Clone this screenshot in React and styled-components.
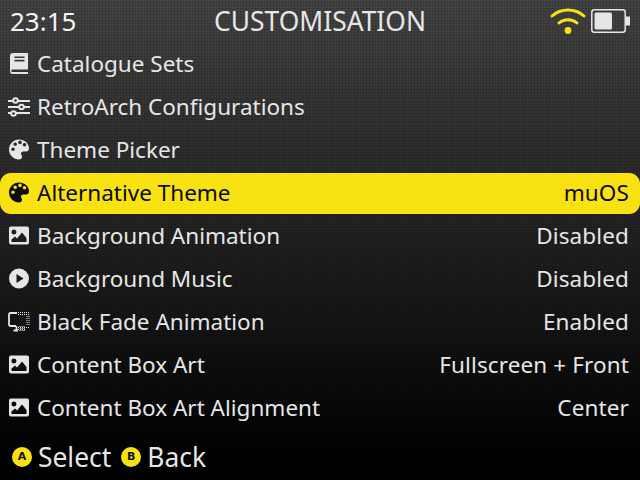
import React from "react";
import styled, { createGlobalStyle } from "styled-components";

const Global = createGlobalStyle`
  html, body { margin: 0; padding: 0; background: #000; }
  #root { width: 640px; height: 480px; overflow: hidden; }
`;

const Screen = styled.div`
  width: 640px;
  height: 480px;
  display: flex;
  flex-direction: column;
  font-family: "Noto Sans", sans-serif;
  color: #e6e6e6;
  background:
    repeating-linear-gradient(0deg, rgba(0,0,0,.12) 0 1px, transparent 1px 3px),
    repeating-linear-gradient(90deg, rgba(0,0,0,.12) 0 1px, transparent 1px 3px),
    linear-gradient(#444 0, #000 460px);
`;

const Header = styled.header`
  height: 44px;
  box-sizing: border-box;
  display: grid;
  grid-template-columns: 1fr auto 1fr;
  align-items: center;
  padding: 0 10px 2px;
`;

const Clock = styled.span`
  font-size: 26px;
  color: #f4f4f4;
`;

const Title = styled.span`
  font-size: 26.4px;
`;

const Status = styled.div`
  display: flex;
  justify-content: flex-end;
  align-items: center;
  gap: 5px;
`;

const List = styled.div`
  display: flex;
  flex-direction: column;
  flex: 1;
`;

const Row = styled.div`
  height: 41px;
  box-sizing: border-box;
  margin-bottom: 2px;
  display: flex;
  align-items: center;
  padding: 0 11px 2px 9px;
  font-size: 22.5px;
  line-height: 39px;
  border-radius: 11px;
  ${(p) => (p.$active ? "background:#f9e211;color:#0b0b0b;" : "")}
`;

const IconBox = styled.span`
  width: 20px;
  height: 22px;
  margin-right: 8px;
  display: flex;
  align-items: center;
  justify-content: center;
  flex: none;
`;

const Label = styled.span`
  flex: 1;
`;

const Value = styled.span`
  letter-spacing: 0.12px;
`;

const Footer = styled.footer`
  height: 45px;
  box-sizing: border-box;
  display: flex;
  align-items: center;
  padding: 0 0 2px 12px;
  font-size: 26.4px;
`;

const Badge = styled.span`
  width: 20px;
  height: 20px;
  border-radius: 50%;
  background: #f9e211;
  color: #111;
  font: 700 11px "DejaVu Sans", sans-serif;
  display: flex;
  align-items: center;
  justify-content: center;
  margin-right: 6px;
`;

const Hint = styled.span`
  margin-right: 10px;
`;

const Svg = ({ children }) => (
  <svg width="20" height="21" viewBox="0 0 20 21" fill="currentColor" style={{ flex: "none" }}>{children}</svg>
);

const Book = () => (
  <Svg>
    <path fillRule="evenodd" d="M1 3A3 3 0 0 1 4 0H18a1 1 0 0 1 1 1v14.500a1 1 0 0 1-1 1H3.500a1.300 1.300 0 0 0 0 2.600H19V21H4a3 3 0 0 1-3-3zM5.500 3.500v1.600h10V3.500zM5.500 6.800v1.600h10V6.800z" />
  </Svg>
);
const Sliders = () => (
  <svg width="22" height="20" viewBox="0 0 22 20" fill="none" stroke="currentColor" strokeWidth="2" style={{ flex: "none" }}>
    <path d="M0 4h5M10 4h12M0 10h11M16 10h6M0 16h3M8 16h14" />
    <circle cx="7.500" cy="3.500" r="2.300" /><circle cx="13.500" cy="10" r="2.300" /><circle cx="5.500" cy="16.500" r="2.300" />
  </svg>
);
const Palette = () => (
  <Svg>
    <path fillRule="evenodd" d="M10 .5C4.500 .5 0 5 0 10.500s4.500 10 10 10c2 0 3-1.300 3-2.700 0-1.500-1-2-1-3.300 0-1.200 1-2 2.300-2H17c1.800 0 3-1.200 3-3C20 4.300 15.500 .5 10 .5zM4 12a1.800 1.800 0 1 1 0-3.600A1.800 1.800 0 0 1 4 12zM6.200 7a1.800 1.800 0 1 1 0-3.600 1.800 1.800 0 0 1 0 3.600zM11 5.200a1.800 1.800 0 1 1 0-3.600 1.800 1.800 0 0 1 0 3.600zM15.500 7.500a1.800 1.800 0 1 1 0-3.600 1.800 1.800 0 0 1 0 3.600z" />
  </Svg>
);
const Picture = () => (
  <Svg>
    <path fillRule="evenodd" d="M2 1.500h16a2 2 0 0 1 2 2v14a2 2 0 0 1-2 2H2a2 2 0 0 1-2-2v-14a2 2 0 0 1 2-2zM5 4.500a2.500 2.500 0 1 0 0 5 2.500 2.500 0 0 0 0-5zM2.500 17h15v-4L13 7.500l-5 6-2-2-3.500 3z" />
  </Svg>
);
const Play = () => (
  <Svg>
    <path fillRule="evenodd" d="M10 .5a10 10 0 1 0 0 20 10 10 0 0 0 0-20zM7.500 6v9l7-4.500z" />
  </Svg>
);
const Fade = () => (
  <svg width="22" height="20" viewBox="0 0 22 20" fill="none" stroke="currentColor" strokeWidth="1.800" style={{ flex: "none" }}>
    <path d="M9 1H2.500A1.500 1.500 0 0 0 1 2.500v10A1.500 1.500 0 0 0 2.500 14H8" />
    <path strokeDasharray="1 1" strokeWidth="1" d="M10 .5h11M10 2.500h11M21 4v10M19 4v10M10 15.500h11M10 17.500h8M14 14v6M16 14v6M12 14v6" />
    <path d="M8.500 14v4M5.500 18.500h4.500" />
  </svg>
);
const Wifi = () => (
  <svg width="36" height="26" viewBox="0 0 36 26" fill="none" stroke="#f9e211" strokeWidth="3" strokeLinecap="round" style={{ flex: "none" }}>
    <path d="M2 8C11 0 25 0 34 8" />
    <path d="M9 15C14 10.500 22 10.500 27 15" />
    <circle cx="18" cy="22.500" r="3.400" fill="#f9e211" stroke="none" />
  </svg>
);
const Battery = () => (
  <svg width="39" height="24" viewBox="0 0 39 24" style={{ flex: "none" }}>
    <rect x=".8" y=".8" width="33.400" height="22.400" rx="2.500" fill="none" stroke="#e6e6e6" strokeWidth="1.500" />
    <rect x="3.500" y="3.500" width="17.500" height="17" rx="1.500" fill="#e6e6e6" />
    <rect x="35" y="7.500" width="4" height="9" fill="#e6e6e6" />
  </svg>
);

const items = [
  [Book, "Catalogue Sets"],
  [Sliders, "RetroArch Configurations"],
  [Palette, "Theme Picker"],
  [Palette, "Alternative Theme", "muOS", true],
  [Picture, "Background Animation", "Disabled"],
  [Play, "Background Music", "Disabled"],
  [Fade, "Black Fade Animation", "Enabled"],
  [Picture, "Content Box Art", "Fullscreen + Front"],
  [Picture, "Content Box Art Alignment", "Center"],
];

export default function App() {
  return (
    <Screen>
      <Global />
      <Header>
        <Clock>23:15</Clock>
        <Title>CUSTOMISATION</Title>
        <Status><Wifi /><Battery /></Status>
      </Header>
      <List>
        {items.map(([Icon, label, value, active]) => (
          <Row key={label} $active={active}>
            <IconBox><Icon /></IconBox>
            <Label>{label}</Label>
            {value && <Value>{value}</Value>}
          </Row>
        ))}
      </List>
      <Footer>
        <Badge>A</Badge><Hint>Select</Hint>
        <Badge>B</Badge><Hint>Back</Hint>
      </Footer>
    </Screen>
  );
}
